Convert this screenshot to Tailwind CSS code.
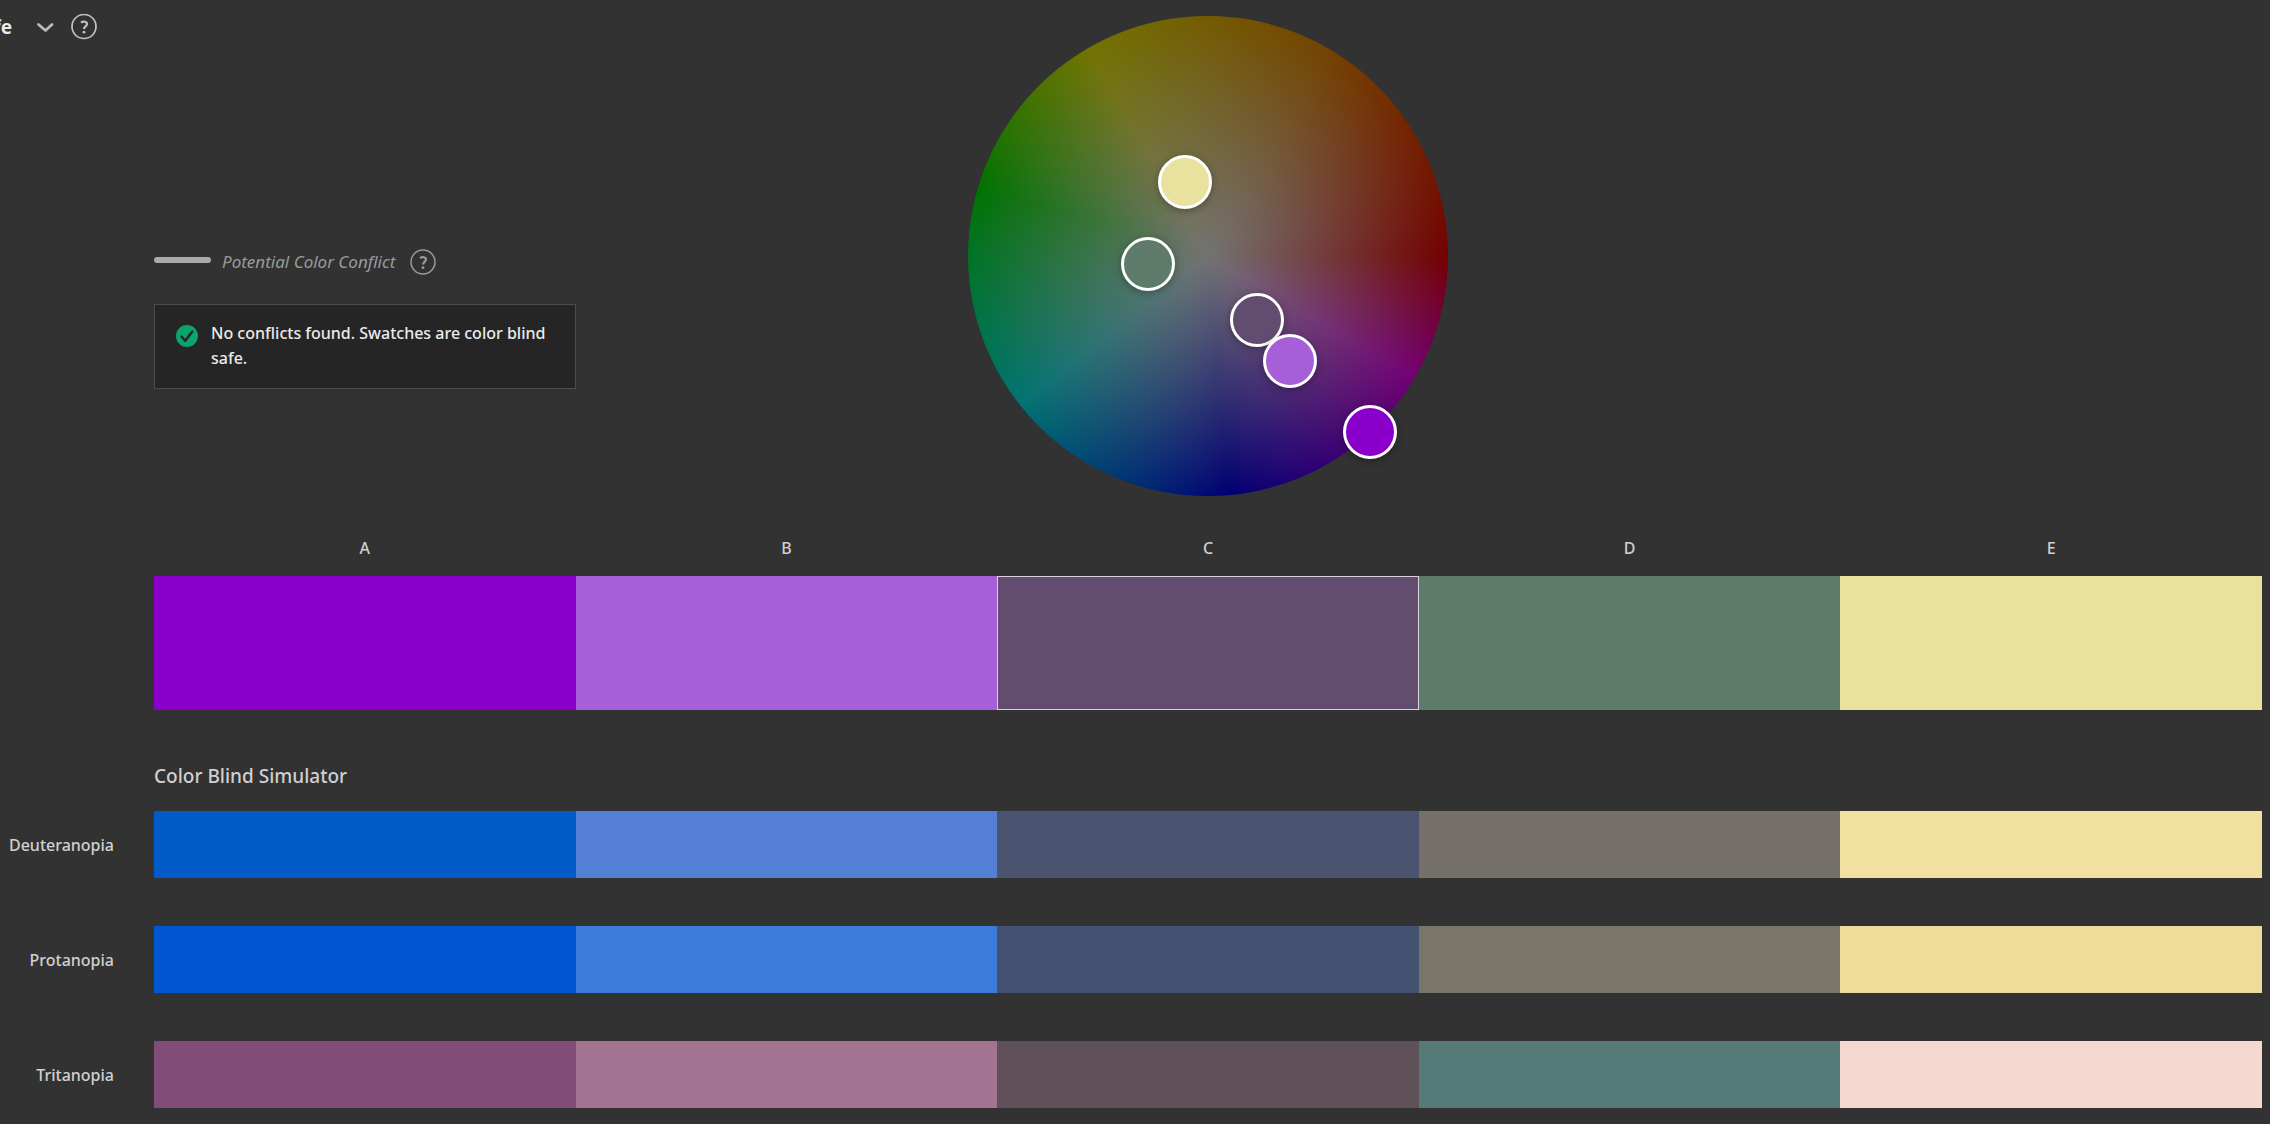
<!DOCTYPE html>
<html lang="en">
<head>
<meta charset="utf-8">
<meta name="viewport" content="width=device-width, initial-scale=1">
<title>Color Blind Safe</title>
<script src="https://cdn.jsdelivr.net/npm/@tailwindcss/browser@4"></script>
</head>
<body class="min-h-screen overflow-x-hidden bg-[#323232] font-['Noto_Sans','Open_Sans',sans-serif] text-[16px] leading-6 font-medium text-[#d0d0d0]">
<main class="pr-2 pb-4">

  <section class="grid grid-cols-[154px_1fr_480px_1fr] grid-rows-[54px_1fr]">
    <header class="col-span-2 flex items-center">
      <h1 class="flex w-3 justify-end overflow-hidden text-[19px] font-bold text-[#eaeaea]">fe</h1>
      <button type="button" aria-label="Choose tool" class="ml-6 flex h-6 w-[18px] items-center justify-center">
        <svg class="h-3 w-[18px]" viewBox="0 0 18 12" fill="none" stroke="#b9b9b9" stroke-width="2.800" stroke-linecap="round" stroke-linejoin="round"><path d="M2.500 3.500l7 6 6.500-6"/></svg>
      </button>
      <button type="button" aria-label="Help" class="ml-[17px]">
        <svg class="size-[26px]" viewBox="0 0 26 26" fill="none" stroke="#c2c2c2"><circle cx="13" cy="12.500" r="12" stroke-width="1.700"/><path d="M10 8.700c2.200-1.600 6-1.300 6 1.400 0 2.300-3 2.400-3 5" stroke-width="2.200"/><circle cx="13" cy="18.200" r="1.400" fill="#c2c2c2" stroke="none"/></svg>
      </button>
    </header>

    <div class="col-start-2 row-start-2 w-[422px] pt-[195px]">
      <div class="flex items-center">
        <span class="-mt-1 h-[6px] w-[57px] rounded-full bg-[#ababab]"></span>
        <span class="ml-[11px] text-[17px] font-normal text-[#9a9a9a] italic">Potential Color Conflict</span>
        <button type="button" aria-label="About color conflicts" class="ml-[15px]">
          <svg class="size-[26px]" viewBox="0 0 26 26" fill="none" stroke="#9a9a9a"><circle cx="13" cy="13" r="12" stroke-width="1.500"/><path d="M10 9.200c2.200-1.600 6-1.300 6 1.400 0 2.300-3 2.400-3 5" stroke-width="2.200"/><circle cx="13" cy="18.700" r="1.400" fill="#9a9a9a" stroke="none"/></svg>
        </button>
      </div>
      <div role="status" class="mt-[29px] flex border border-[#4b4b4b] bg-[#252525] px-[21px] pt-4 pb-[17px]">
        <svg class="mt-1 size-[22px] shrink-0" viewBox="0 0 22 22"><circle cx="11" cy="11" r="11" fill="#0aa56d"/><path d="M5.500 11.500l3.800 4.300 7-9.300" fill="none" stroke="#252525" stroke-width="2.500" stroke-linecap="round" stroke-linejoin="round"/></svg>
        <p class="ml-[13px] leading-[25px] text-[#eaeaea]">No conflicts found. Swatches are color blind safe.</p>
      </div>
    </div>

    <div class="relative col-start-3 row-span-2 row-start-1 mt-4 size-[480px]">
      <div class="size-full rounded-full bg-[radial-gradient(closest-side,#737373,#73737300),conic-gradient(from_90deg,#730000,#730073_30deg,#000073_85deg,#007373_142deg,#007300_197deg,#737300_240deg,#734300_300deg,#730000_360deg)]"></div>
      <button type="button" aria-label="Color C" class="absolute top-[277px] left-[262px] size-[54px] rounded-full border-3 border-white bg-[#624c70] shadow-[0_2px_8px_#00000050]"></button>
      <button type="button" aria-label="Color E" class="absolute top-[139px] left-[190px] size-[54px] rounded-full border-3 border-white bg-[#e9e29e] shadow-[0_2px_8px_#00000050]"></button>
      <button type="button" aria-label="Color D" class="absolute top-[221px] left-[153px] size-[54px] rounded-full border-3 border-white bg-[#5d7a6a] shadow-[0_2px_8px_#00000050]"></button>
      <button type="button" aria-label="Color B" class="absolute top-[318px] left-[295px] size-[54px] rounded-full border-3 border-white bg-[#a65fd8] shadow-[0_2px_8px_#00000050]"></button>
      <button type="button" aria-label="Color A" class="absolute top-[389px] left-[375px] size-[54px] rounded-full border-3 border-white bg-[#8a00ca] shadow-[0_2px_8px_#00000050]"></button>
    </div>
  </section>

  <section class="mt-10 ml-[154px]">
    <div class="grid grid-cols-5 text-center">
      <span>A</span><span>B</span><span>C</span><span>D</span><span>E</span>
    </div>
    <div class="mt-4 grid h-[134px] grid-cols-5">
      <button type="button" aria-label="Swatch A" class="bg-[#8a00ca]"></button>
      <button type="button" aria-label="Swatch B" class="bg-[#a65fd8]"></button>
      <button type="button" aria-label="Swatch C" class="border border-[#d8d4dc] bg-[#624c70]"></button>
      <button type="button" aria-label="Swatch D" class="bg-[#5d7a6a]"></button>
      <button type="button" aria-label="Swatch E" class="bg-[#e9e29e]"></button>
    </div>
  </section>

  <section class="mt-[54px]">
    <h2 class="ml-[154px] text-[19px] leading-6">Color Blind Simulator</h2>
    <div class="mt-[23px] flex flex-col gap-12">
      <div class="flex items-center gap-10">
        <h3 class="w-[114px] shrink-0 text-right">Deuteranopia</h3>
        <div class="grid h-[67px] flex-1 grid-cols-5"><span class="bg-[#005ac8]"></span><span class="bg-[#5380d4]"></span><span class="bg-[#4a5370]"></span><span class="bg-[#75716a]"></span><span class="bg-[#f2e0a0]"></span></div>
      </div>
      <div class="flex items-center gap-10">
        <h3 class="w-[114px] shrink-0 text-right">Protanopia</h3>
        <div class="grid h-[67px] flex-1 grid-cols-5"><span class="bg-[#0055d2]"></span><span class="bg-[#3a7bdc]"></span><span class="bg-[#445272]"></span><span class="bg-[#797568]"></span><span class="bg-[#efdc98]"></span></div>
      </div>
      <div class="flex items-center gap-10">
        <h3 class="w-[114px] shrink-0 text-right">Tritanopia</h3>
        <div class="grid h-[67px] flex-1 grid-cols-5"><span class="bg-[#824c78]"></span><span class="bg-[#a27491]"></span><span class="bg-[#605059]"></span><span class="bg-[#567a77]"></span><span class="bg-[#f5d8d0]"></span></div>
      </div>
    </div>
  </section>

</main>
</body>
</html>
